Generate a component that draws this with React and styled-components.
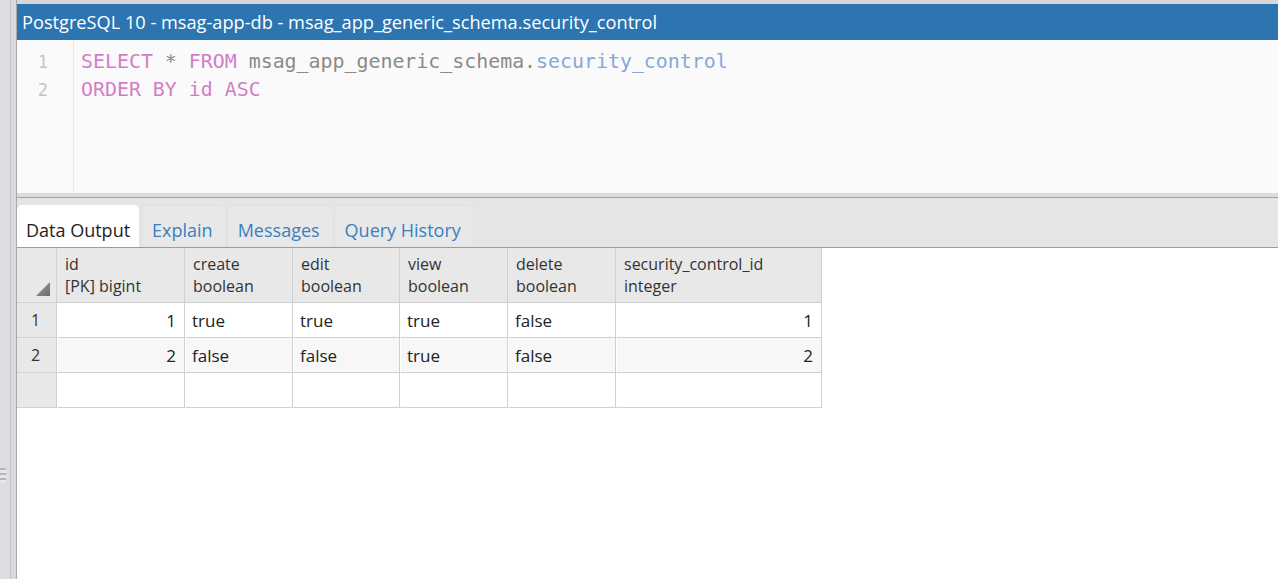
import React from "react";
import styled, { createGlobalStyle } from "styled-components";

const GlobalStyle = createGlobalStyle`
  html, body {
    margin: 0;
    padding: 0;
    background: #ffffff;
    overflow: hidden;
  }
  body {
    font-family: "Open Sans", "Noto Sans", sans-serif;
  }
`;

const Screen = styled.div`
  display: flex;
  width: 1278px;
  height: 579px;
  overflow: hidden;
`;

const LeftRail = styled.div`
  width: 17px;
  flex-shrink: 0;
  box-sizing: border-box;
  padding-top: 468px;
  background: linear-gradient(
    to right,
    #dcdde0 0,
    #dcdde0 10px,
    #c6c7c9 10px,
    #c6c7c9 11px,
    #d9dadc 11px
  );
  border-right: 1px solid #a9a9a9;
`;

const Grip = styled.div`
  width: 6px;
  height: 15px;
  background: repeating-linear-gradient(
    to bottom,
    #b4b4b4 0,
    #b4b4b4 2px,
    #e6e6e6 2px,
    #e6e6e6 5px
  );
`;

const Main = styled.div`
  flex: 1;
  display: flex;
  flex-direction: column;
  min-width: 0;
`;

const TopStrip = styled.div`
  height: 4px;
  background: #d7d7d7;
`;

const TitleBar = styled.div`
  height: 36px;
  display: flex;
  align-items: center;
  padding-left: 5px;
  background: #2c75b1;
  color: #ffffff;
  font-size: 18.2px;
  white-space: nowrap;
`;

const Editor = styled.div`
  height: 153px;
  display: flex;
  background: #fafafa;
`;

const Gutter = styled.div`
  width: 57px;
  flex-shrink: 0;
  border-right: 1px solid #ececec;
  padding-top: 8px;
  font-family: "DejaVu Sans Mono", "Liberation Mono", monospace;
  font-size: 17px;
  color: #c4c4c4;
  text-align: right;
  box-sizing: border-box;
  padding-right: 25px;
`;

const Code = styled.div`
  padding: 8px 0 0 7px;
  font-family: "DejaVu Sans Mono", "Liberation Mono", monospace;
  font-size: 19.9px;
  color: #8a8a8a;
`;

const Line = styled.div`
  height: 28px;
  line-height: 28px;
  white-space: pre;
`;

const Tok = styled.span`
  color: ${({ $kind }) =>
    $kind === "kw" ? "#d27ec7" : $kind === "tbl" ? "#83a9d9" : "#8a8a8a"};
`;

const Splitter = styled.div`
  height: 4px;
  background: #dcdcdc;
  border-bottom: 1px solid #a3a3a3;
`;

const TabBar = styled.div`
  height: 42px;
  padding-top: 7px;
  display: flex;
  align-items: stretch;
  gap: 1px;
  background: #e5e5e5;
  border-bottom: 1px solid #9c9c9c;
`;

const Tab = styled.div`
  display: flex;
  align-items: center;
  padding: ${({ $active }) => ($active ? "8px 9px 0 9px" : "8px 12px 0 11px")};
  margin-left: ${({ $first }) => ($first ? "0" : "1px")};
  font-size: 18px;
  border-radius: 5px 5px 0 0;
  color: ${({ $active }) => ($active ? "#1e1e1e" : "#3a7fbe")};
  background: ${({ $active }) => ($active ? "#ffffff" : "#e8e8e8")};
  box-shadow: ${({ $active }) =>
    $active ? "none" : "inset 0 1px 0 #e0e0e0, inset 1px 0 0 #e0e0e0"};
`;

const GridArea = styled.div`
  flex: 1;
  background: #ffffff;
`;

const Grid = styled.div`
  display: grid;
  grid-template-columns: 40px 128px 108px 107px 108px 108px 206px;
  grid-auto-rows: 35px;
  grid-template-rows: 55px;
  width: max-content;
`;

const HeadCell = styled.div`
  position: relative;
  box-sizing: border-box;
  padding: 5px 8px 0;
  background: #e8e8e8;
  border-right: 1px solid #d0d0d0;
  border-bottom: 1px solid #d0d0d0;
  font-size: 16px;
  line-height: 22px;
  color: #333333;
  white-space: nowrap;
`;

const SortMark = styled.svg`
  position: absolute;
  right: 6px;
  bottom: 6px;
`;

const RowNum = styled.div`
  box-sizing: border-box;
  display: flex;
  align-items: center;
  padding-left: 14px;
  background: #e8e8e8;
  border-right: 1px solid #d0d0d0;
  border-bottom: 1px solid #d0d0d0;
  font-size: 16px;
  color: #333333;
`;

const Cell = styled.div`
  box-sizing: border-box;
  display: flex;
  align-items: center;
  justify-content: ${({ $num }) => ($num ? "flex-end" : "flex-start")};
  padding: 0 8px 0 6px;
  background: ${({ $alt }) => ($alt ? "#f7f7f7" : "#ffffff")};
  border-right: 1px solid #d0d0d0;
  border-bottom: 1px solid #d0d0d0;
  border-left: 1px solid #ffffff;
  font-size: 17px;
  color: #222222;
`;

const columns = [
  { name: "id", type: "[PK] bigint", num: true },
  { name: "create", type: "boolean" },
  { name: "edit", type: "boolean" },
  { name: "view", type: "boolean" },
  { name: "delete", type: "boolean" },
  { name: "security_control_id", type: "integer", num: true },
];

const rows = [
  ["1", "true", "true", "true", "false", "1"],
  ["2", "false", "false", "true", "false", "2"],
  ["", "", "", "", "", ""],
];

const tabs = ["Data Output", "Explain", "Messages", "Query History"];

export default function App() {
  return (
    <>
      <GlobalStyle />
      <Screen>
        <LeftRail>
          <Grip />
        </LeftRail>
        <Main>
          <TopStrip />
          <TitleBar>
            PostgreSQL 10 - msag-app-db - msag_app_generic_schema.security_control
          </TitleBar>
          <Editor>
            <Gutter>
              <Line>1</Line>
              <Line>2</Line>
            </Gutter>
            <Code>
              <Line>
                <Tok $kind="kw">SELECT</Tok> * <Tok $kind="kw">FROM</Tok>{" "}
                msag_app_generic_schema.<Tok $kind="tbl">security_control</Tok>
              </Line>
              <Line>
                <Tok $kind="kw">ORDER BY id ASC</Tok>
              </Line>
            </Code>
          </Editor>
          <Splitter />
          <TabBar>
            {tabs.map((t, i) => (
              <Tab key={t} $active={i === 0} $first={i === 0}>
                {t}
              </Tab>
            ))}
          </TabBar>
          <GridArea>
            <Grid>
              <HeadCell>
                <SortMark width="14" height="14" viewBox="0 0 14 14">
                  <defs>
                    <linearGradient id="sm" x1="0" y1="0" x2="1" y2="1">
                      <stop offset="0" stopColor="#9a9a9a" />
                      <stop offset="1" stopColor="#6e6e6e" />
                    </linearGradient>
                  </defs>
                  <polygon points="14,0 14,14 0,14" fill="url(#sm)" />
                </SortMark>
              </HeadCell>
              {columns.map((c) => (
                <HeadCell key={c.name}>
                  {c.name}
                  <br />
                  {c.type}
                </HeadCell>
              ))}
              {rows.map((r, ri) => (
                <React.Fragment key={ri}>
                  <RowNum>{r[0] ? ri + 1 : ""}</RowNum>
                  {r.map((v, ci) => (
                    <Cell key={ci} $num={columns[ci].num} $alt={ri === 1}>
                      {v}
                    </Cell>
                  ))}
                </React.Fragment>
              ))}
            </Grid>
          </GridArea>
        </Main>
      </Screen>
    </>
  );
}
